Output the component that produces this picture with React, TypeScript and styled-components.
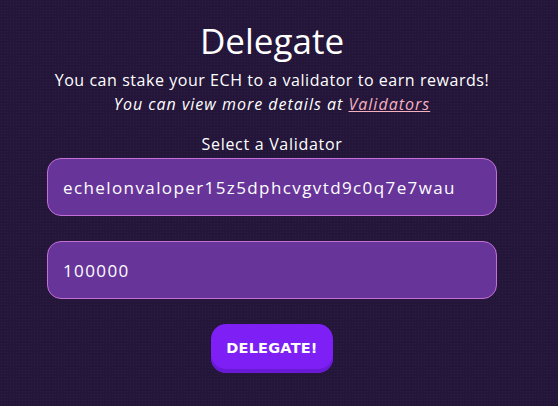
import React from "react";
import styled, { createGlobalStyle } from "styled-components";

const Global = createGlobalStyle`
  html, body { margin: 0; padding: 0; }
  body {
    background-color: #231638;
    background-image: radial-gradient(circle, rgba(70, 40, 110, 0.35) 0.7px, transparent 1px);
    background-size: 3px 3px;
    font-family: "Open Sans", "Liberation Sans", sans-serif;
    color: #ffffff;
    width: 558px;
    height: 406px;
    overflow: hidden;
  }
`;

const Page = styled.main`
  width: 544px;
  display: flex;
  flex-direction: column;
  align-items: center;
  padding-top: 18px;
`;

const Title = styled.h1`
  margin: 0;
  font-weight: 400;
  font-size: 35px;
  line-height: 46px;
`;

const Intro = styled.p`
  margin: 4px 0 0;
  font-size: 16px;
  letter-spacing: 0.55px;
  line-height: 24px;
  text-align: center;
`;

const Hint = styled.p`
  margin: 0;
  font-size: 16px;
  letter-spacing: 1px;
  line-height: 24px;
  font-style: italic;
  text-align: center;
`;

const Link = styled.a`
  color: #f6b1c0;
  text-decoration: underline;
`;

const Label = styled.div`
  margin-top: 18px;
  font-size: 16px;
  letter-spacing: 0.7px;
  line-height: 20px;
`;

const Form = styled.div`
  display: flex;
  flex-direction: column;
  align-items: center;
  gap: 25px;
  margin-top: 4px;
`;

const Field = styled.input`
  box-sizing: border-box;
  width: 450px;
  height: 58px;
  border-radius: 14px;
  border: 1px solid #c46fd6;
  background: #67359a;
  color: #ffffff;
  font-family: inherit;
  font-size: 17px;
  letter-spacing: 1.4px;
  padding: 0 40px 0 15px;
  outline: none;
`;

const Button = styled.button`
  box-sizing: border-box;
  width: 122px;
  height: 49px;
  border: none;
  border-radius: 15px;
  background: #7d1ff5;
  box-shadow: inset 0 -4px 0 #6a1ad6;
  color: #ffffff;
  font-family: "DejaVu Sans", sans-serif;
  font-weight: 800;
  font-size: 14.5px;
  letter-spacing: 0.2px;
  padding-bottom: 3px;
  cursor: pointer;
`;

export default function App() {
  return (
    <>
      <Global />
      <Page>
        <Title>Delegate</Title>
        <Intro>You can stake your ECH to a validator to earn rewards!</Intro>
        <Hint>
          You can view more details at <Link href="#">Validators</Link>
        </Hint>
        <Label>Select a Validator</Label>
        <Form>
          <Field defaultValue="echelonvaloper15z5dphcvgvtd9c0q7e7wau7" />
          <Field defaultValue="100000" />
          <Button>DELEGATE!</Button>
        </Form>
      </Page>
    </>
  );
}
